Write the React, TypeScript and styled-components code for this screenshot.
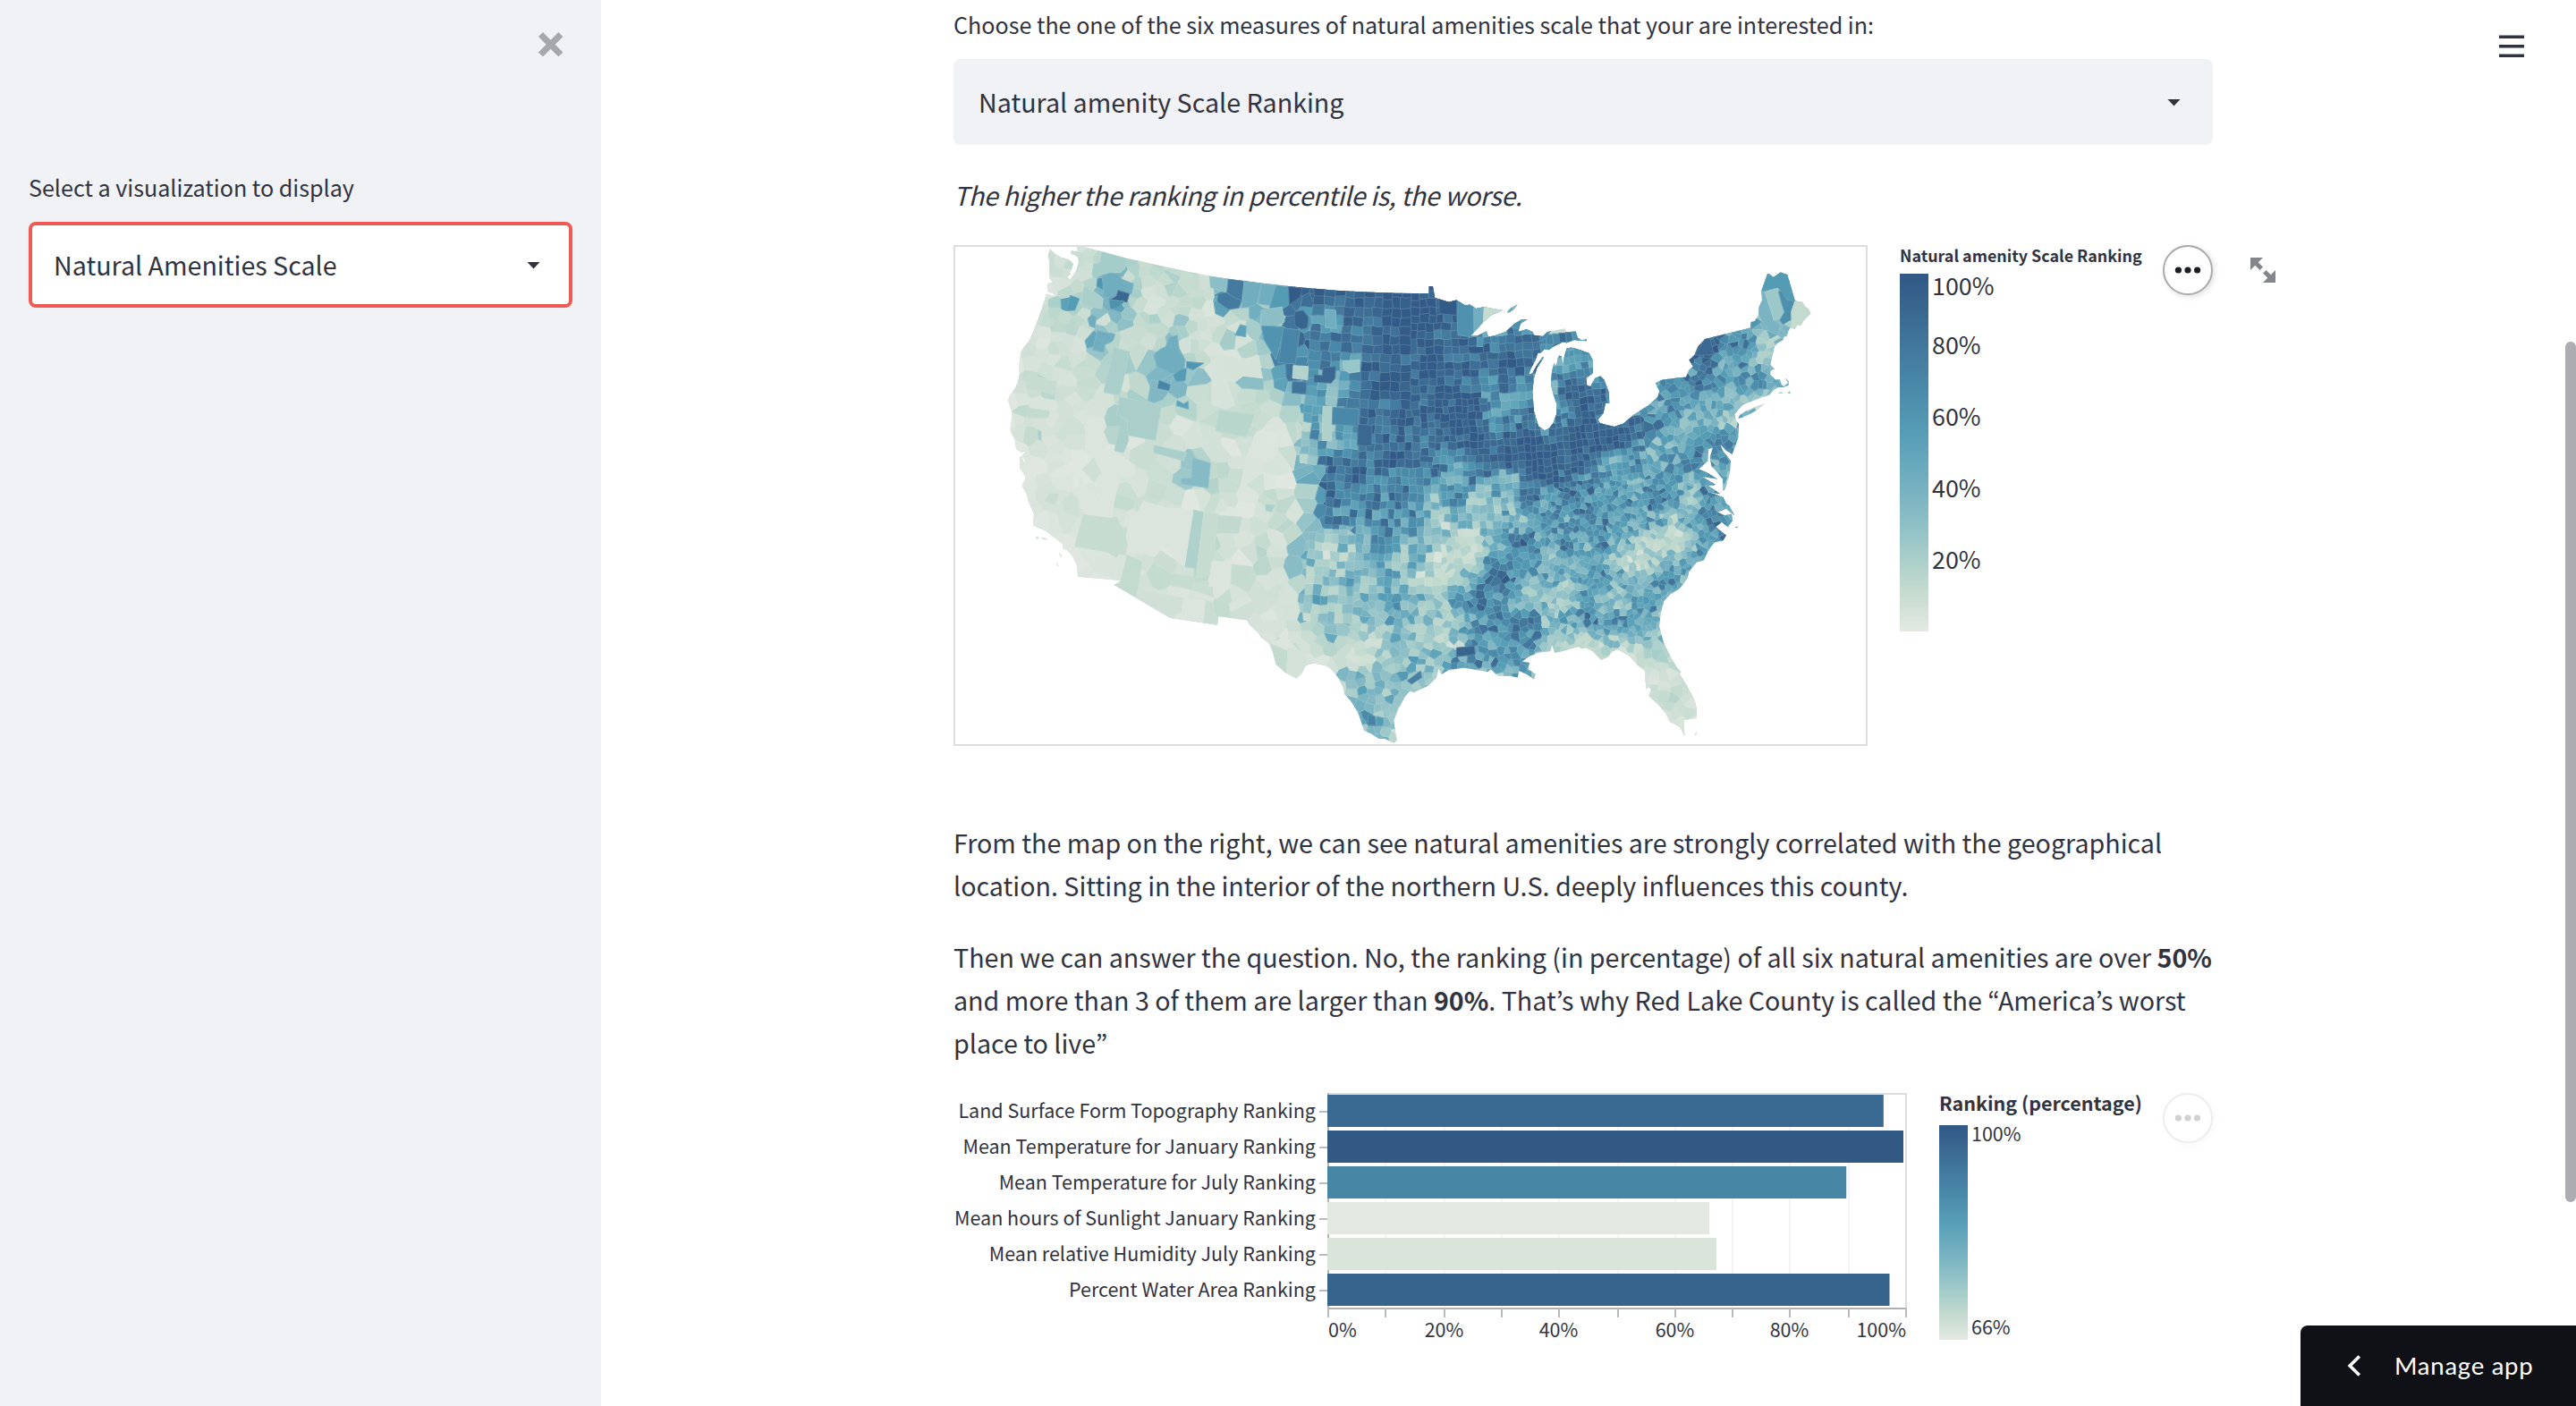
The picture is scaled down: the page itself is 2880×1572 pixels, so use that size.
import React from "react";
import styled, { createGlobalStyle } from "styled-components";

const FONT = '"Noto Sans CJK KR", "Noto Sans", sans-serif';
const INK = "#31333f";

const GlobalStyle = createGlobalStyle`
  * { box-sizing: border-box; }
  html, body { margin: 0; padding: 0; background: #fff; overflow: hidden; }
  body { font-family: ${FONT}; color: ${INK}; }
  p { margin: 0; }
`;

/* ---------- colour ramp ---------- */

const RAMP: [number, number[]][] = [
  [0, [228, 233, 226]],
  [0.12, [195, 218, 206]],
  [0.2, [170, 207, 202]],
  [0.27, [150, 196, 200]],
  [0.4, [118, 177, 193]],
  [0.55, [86, 158, 182]],
  [0.7, [72, 134, 167]],
  [0.8, [66, 119, 156]],
  [0.9, [57, 103, 143]],
  [1, [49, 88, 134]],
];

function ramp(t: number): string {
  const v = Math.max(0, Math.min(1, t));
  for (let i = 1; i < RAMP.length; i++) {
    if (v <= RAMP[i][0]) {
      const [a, ca] = RAMP[i - 1];
      const [b, cb] = RAMP[i];
      const f = (v - a) / (b - a);
      return `rgb(${ca.map((c, k) => Math.round(c + (cb[k] - c) * f)).join(",")})`;
    }
  }
  return "rgb(49,88,134)";
}

const RAMP_CSS = `linear-gradient(to top, ${RAMP.map(
  ([t]) => `${ramp(t)} ${t * 100}%`
).join(", ")})`;

/* ---------- map geometry ---------- */

type Pt = [number, number];

/* Map drawing units to page pixels, relative to the frame corner. */
const toPx = (u: number, v: number): Pt => [u / 3 - 6, v / 2.7034 - 14];

const parse = (s: string, dx = 0): Pt[] =>
  s
    .trim()
    .split(/\s+/)
    .map((p) => {
      const [x, y] = p.split(",").map(Number);
      return toPx(x + dx, y);
    });

const NORTH_WEST = `342,50 360,65 380,75 405,82 420,95 415,110 408,120 412,125 400,135 410,142
 430,115 438,90 436,75 428,70 415,62 428,55 436,60 432,42 460,45 518,58 600,78 700,98 800,118 880,132 940,140
 1050,153 1150,163 1300,175 1400,180 1500,183 1560,184`;

const EAST = `113,184 113,162 126,163 133,197 160,205 180,210 205,204 235,220 250,218 270,230
 298,225 360,235 320,250 295,270 270,295 252,313 275,312 305,298 312,315 330,312 370,300 400,275
 425,262 443,262 420,275 412,300 440,292 460,300 465,310 495,313 510,300 540,295 570,290 572,300
 605,298 612,318 625,325 642,322 640,328 600,325 575,333 560,332 530,345 515,355 500,352 490,362 478,365 470,385
 455,410 447,430 460,425 475,400 495,375 497,378 475,410 465,440 460,480 465,540 480,585 500,598
 515,592 530,575 540,550 542,520 530,490 522,460 525,420 532,395 540,405 545,380 550,372 558,375 560,405 568,370
 575,350 590,347 620,355 650,365 662,385 662,425 640,440 643,462 655,465 670,440 688,434
 700,445 715,480 718,515 705,515 698,545 680,565 685,575 710,582 735,587 765,577 800,550
 850,522 880,497 886,480 872,455 895,445 940,440 975,437 985,415 998,405 985,385 1003,370
 1015,345 1038,322 1190,288 1193,270 1205,268 1212,258 1218,250 1220,225 1230,205 1228,175 1248,125
 1255,125 1268,135 1292,120 1315,128 1340,205 1350,208 1365,210 1375,225 1385,230 1393,245 1370,265 1360,282 1348,280 1340,292 1325,287 1318,297
 1312,315 1305,312 1300,325 1280,335 1272,345 1265,370 1258,400 1272,412 1258,418 1258,430 1275,445 1290,445 1295,460 1303,465
 1318,455 1308,440 1320,450 1318,462 1300,468 1285,468 1270,475 1255,490 1215,503 1165,520 1150,535
 1138,550 1142,570 1152,578 1150,620 1140,645 1130,670 1110,660 1090,640 1098,660 1112,675 1125,690
 1122,725 1108,770 1100,782 1098,745 1075,720 1060,705 1055,680 1065,650 1050,655 1048,690 1018,715
 1045,725 1080,745 1030,738 1075,762 1050,765 1090,790 1055,785 1100,800 1110,820 1120,825 1137,855
 1110,835 1080,845 1105,855 1128,850 1132,870 1115,890 1095,875 1075,890 1110,915 1100,930
 1070,937 1050,960 1035,990 1010,997 985,1025 980,1045 955,1075 920,1095 900,1115 890,1150
 885,1190 900,1240 925,1285 945,1315 960,1330 952,1332 975,1365 1005,1415 1011,1440 1011,1468 968,1473
 970,1522 955,1495 920,1478 908,1455 885,1430 850,1400 858,1380 848,1374 842,1380 838,1350 838,1325 812,1307
 785,1280 745,1260 725,1268 715,1282 690,1292 665,1268 640,1255 625,1258 615,1252 560,1265 535,1270 525,1245
 520,1265 480,1270 450,1280 425,1297 450,1300 445,1320 470,1335 465,1350 440,1335 415,1325 410,1345
 385,1340 345,1340 320,1320 310,1328 290,1325 230,1315 180,1322 155,1335 145,1318 138,1345 110,1370 60,1390`;

const SOUTH_WEST = `1550,1385 1530,1405 1510,1440 1495,1475 1500,1510 1505,1535
 1495,1542 1465,1530 1445,1530 1420,1515 1395,1505 1375,1450 1350,1415 1330,1395 1325,1375 1312,1352 1300,1335
 1285,1320 1270,1310 1225,1302 1200,1308 1185,1335 1168,1348 1130,1330 1100,1305 1088,1265 1075,1240
 1050,1225 1040,1210 1010,1185 1003,1172 907,1160 903,1186 745,1165 557,1065 578,1052 435,1040 432,1005
 415,975 398,960 385,955 383,940 345,915 325,900 285,885 288,850 270,815 265,795 248,765 260,740 240,710 240,680
 246,675 255,697 258,690 248,675 260,660 248,665 228,655 225,630 208,595 215,550 202,510 205,495 225,470 235,450 240,425 237,405 245,360
 255,345 270,330 285,300 305,255 320,215 330,185 358,192 355,185 335,180 332,155 352,150 340,138 340,85 335,70`;

const EAST_ISLANDS = [
  "375,240 385,230 410,217 398,232 380,242",
  "1150,562 1155,552 1175,540 1215,524 1240,517 1215,535 1190,548 1165,558",
  "1284,487 1296,481 1300,487",
  "1316,485 1322,480 1325,487",
  "1003,1520 1010,1508 1011,1515",
  "1137,890 1148,888 1148,893",
];
const WEST_ISLANDS = [
  "293,920 303,920 304,926 296,926",
  "311,921 325,923 334,929 318,928",
  "371,968 382,976 379,982",
  "363,994 371,1008 367,1008",
  "410,58 418,54 424,60 416,68",
];

const path = (pts: Pt[]) =>
  "M" + pts.map(([x, y]) => `${x.toFixed(1)} ${y.toFixed(1)}`).join("L") + "Z";

const OUTLINE = [
  path([...parse(NORTH_WEST), ...parse(EAST, 1500), ...parse(SOUTH_WEST)]),
  ...EAST_ISLANDS.map((s) => path(parse(s, 1500))),
  ...WEST_ISLANDS.map((s) => path(parse(s))),
].join("");

/* Ranking surface, one digit per 20px column and 22px row. */
const FIELD = [
  "1111133222222555588999999999555555555555555566",
  "1111133222224855588899999999755555555555666665",
  "1111145312214855988989999976655555555555566665",
  "1114347212217555888899999863555555555555554422",
  "1122223323212144766889999875566778666666655522",
  "1111152115112337788889988877888776666688673433",
  "1111223245411117777589899788986565666678564333",
  "1221123245321434664789889876874887666777667555",
  "0111112233411122554788988996674898766655542222",
  "0211113331122211164888889996786798887655355555",
  "0111112221011110364677878898898999975557766666",
  "0010010122331200358889977788999896564676666666",
  "0011011122332100358776776566488876656647544444",
  "0011001122111012258787764834586776667637654444",
  "0001111000210112347677662445447676665357744444",
  "0000112200121121354456454225775757542236774444",
  "0000000101031022342455442237674656323566444444",
  "0000001112110211344546322367755456546644444444",
  "0000000111012111353445554677644364466333333333",
  "0000000001012111333355433467774576665333333333",
  "0000000001012111124224432366774323444222222222",
  "0000000001012112111113454676653222122211111111",
  "0000000001011111111444443444553222111111111111",
  "0000000001011111111444433444443222111211111111",
  "0000000001011111111464323333332222111111111111",
  "0000000001011111111434222222222222111111111111",
];

const LEVELS = [0.015, 0.06, 0.12, 0.2, 0.31, 0.43, 0.57, 0.72, 0.87, 0.98];

const at = (r: number, c: number) => {
  const row = FIELD[Math.max(0, Math.min(FIELD.length - 1, r))];
  return Number(row[Math.max(0, Math.min(row.length - 1, c))]);
};

const levelToValue = (l: number) => {
  const k = Math.max(0, Math.min(8.999, l));
  const i = Math.floor(k);
  return LEVELS[i] + (LEVELS[i + 1] - LEVELS[i]) * (k - i);
};

const ease = (t: number) => t * t * (3 - 2 * t);

function field(x: number, y: number): number {
  const c = ((x + 6) * 3 - 210) / 60;
  const r = ((y + 14) * 2.7034 - 30) / 60;
  const c0 = Math.floor(c);
  const r0 = Math.floor(r);
  const fc = ease(c - c0);
  const fr = ease(r - r0);
  const top = at(r0, c0) * (1 - fc) + at(r0, c0 + 1) * fc;
  const bot = at(r0 + 1, c0) * (1 - fc) + at(r0 + 1, c0 + 1) * fc;
  return top * (1 - fr) + bot * fr;
}

/* Albers equal-area conic */
const RAD = Math.PI / 180;
const N = (Math.sin(29.5 * RAD) + Math.sin(45.5 * RAD)) / 2;
const C = Math.cos(29.5 * RAD) ** 2 + 2 * N * Math.sin(29.5 * RAD);
const project = (lon: number, lat: number): Pt => {
  const rho = (1244.6 * Math.sqrt(C - 2 * N * Math.sin(lat * RAD))) / N;
  const th = N * (lon + 96) * RAD;
  return [1584.7 - 1066 + rho * Math.sin(th), -1043.8 - 274 + rho * Math.cos(th)];
};

let state = 20231;
const rnd = () => {
  state = (state * 1664525 + 1013904223) % 4294967296;
  return state / 4294967296;
};

/* west, east, south, north, lon step, lat step, jitter; jitter 0 marks surveyed land with square counties */
const REGIONS = [
  [-102.05, -94.6, 37, 40, 0.5, 0.43, 0],
  [-104, -95.8, 40, 43, 0.56, 0.43, 0],
  [-95.8, -91, 40.6, 43.5, 0.5, 0.36, 0],
  [-104, -96.5, 43, 49.2, 0.72, 0.46, 0],
  [-103, -100, 32, 36.5, 0.54, 0.43, 0],
  [-100, -94.5, 33.6, 37, 0.5, 0.42, 0],
  [-95.8, -90.5, 36.5, 40.6, 0.5, 0.38, 0],
  [-90.5, -88, 36.5, 38.4, 0.42, 0.32, 0.3],
  [-86.9, -82, 41.7, 46, 0.5, 0.35, 0],
  [-91, -86.9, 38.4, 42.5, 0.46, 0.38, 0],
  [-86.9, -80.5, 38.9, 41.7, 0.42, 0.34, 0],
  [-86.9, -80.5, 38.4, 38.9, 0.38, 0.32, 0.3],
  [-96.5, -86.9, 42.5, 49.5, 0.62, 0.42, 0],
  [-71, -66.5, 44.5, 47.6, 0.7, 0.6, 0.4],
  [-82, -79.9, 24.5, 30.3, 0.6, 0.42, 0.3],
  [-94.5, -88, 29, 36.5, 0.46, 0.36, 0.42],
  [-88, -75, 30.3, 38.4, 0.37, 0.3, 0.5],
  [-88, -82, 24.5, 30.3, 0.5, 0.4, 0.35],
  [-82, -66.5, 38.4, 45.6, 0.48, 0.36, 0.5],
  [-100, -94.5, 25.5, 33.6, 0.48, 0.4, 0.4],
  [-107, -100, 28.5, 32, 0.8, 0.55, 0.4],
  [-111, -102, 31, 49.3, 1.1, 0.66, 0.48],
  [-125.5, -111, 45, 49.3, 0.85, 0.55, 0.48],
  [-125.5, -119, 32, 45, 0.9, 0.6, 0.48],
  [-119, -111, 31, 45, 1.25, 0.85, 0.48],
];

interface Seed {
  x: number;
  y: number;
  reach: number;
}

interface Cell {
  d: string;
  fill: string;
}

function shade(x: number, y: number): string {
  const base = field(x, y);
  const spread = base < 2.2 ? 0.9 : base > 7.6 ? 1.3 : 1.9;
  return ramp(levelToValue(base + (rnd() + rnd() - 1) * spread * 1.2));
}

function makeSeeds(): Seed[] {
  const seeds: Seed[] = [];
  REGIONS.forEach(([w, e, s, n, dx, dy, j], idx) => {
    const cols = Math.round((e - w) / dx);
    const rows = Math.round((n - s) / dy);
    const sx = (e - w) / cols;
    const sy = (n - s) / rows;
    for (let r = 0; r < rows; r++) {
      const shift = j > 0.1 ? (rnd() - 0.5) * 0.4 : 0;
      for (let c = 0; c < cols; c++) {
        const lon = w + (c + 0.5 + shift + (rnd() - 0.5) * 2 * j) * sx;
        const lat = s + (r + 0.5 + (rnd() - 0.5) * 2 * j) * sy;
        const taken = REGIONS.slice(0, idx).some(
          (q) => lon > q[0] && lon < q[1] && lat > q[2] && lat < q[3]
        );
        if (taken) continue;
        const [x, y] = project(lon, lat);
        seeds.push({ x, y, reach: Math.max(sx * 17, sy * 22) * 2.8 });
      }
    }
  });
  return seeds;
}

function clip(poly: Pt[], a: Seed, b: Seed): Pt[] {
  const mx = (a.x + b.x) / 2;
  const my = (a.y + b.y) / 2;
  const nx = b.x - a.x;
  const ny = b.y - a.y;
  const side = (p: Pt) => (p[0] - mx) * nx + (p[1] - my) * ny;
  const out: Pt[] = [];
  for (let i = 0; i < poly.length; i++) {
    const p = poly[i];
    const q = poly[(i + 1) % poly.length];
    const sp = side(p);
    const sq = side(q);
    if (sp <= 0) out.push(p);
    if (sp < 0 !== sq < 0) {
      const t = sp / (sp - sq);
      out.push([p[0] + (q[0] - p[0]) * t, p[1] + (q[1] - p[1]) * t]);
    }
  }
  return out;
}

function makeCells(): Cell[] {
  const seeds = makeSeeds();
  return seeds.map((s) => {
    const h = s.reach / 1.6;
    let poly: Pt[] = [
      [s.x - h, s.y - h],
      [s.x + h, s.y - h],
      [s.x + h, s.y + h],
      [s.x - h, s.y + h],
    ];
    for (const o of seeds) {
      if (o === s) continue;
      if (Math.abs(o.x - s.x) > s.reach || Math.abs(o.y - s.y) > s.reach) continue;
      poly = clip(poly, s, o);
    }
    return { d: path(poly), fill: shade(s.x, s.y) };
  });
}

/* Surveyed land: the box is halved until the parts are about a county in size. */
function makeTracts(): Cell[] {
  const out: Cell[] = [];
  const bend = (lon: number, lat: number): Pt =>
    project(lon + 0.04 * Math.sin(lat * 5.1 + lon * 2.3), lat + 0.03 * Math.sin(lon * 4.7 - lat * 1.9));
  const split = (w: number, e: number, s: number, n: number, dx: number, dy: number) => {
    const kx = (e - w) / dx;
    const ky = (n - s) / dy;
    if (kx * ky < 1.5 || (kx < 1.45 && ky < 1.45)) {
      const ring = [bend(w, s), bend((w + e) / 2, s), bend(e, s), bend(e, n), bend((w + e) / 2, n), bend(w, n)];
      const [cx, cy] = project((w + e) / 2, (s + n) / 2);
      out.push({ d: path(ring), fill: shade(cx, cy) });
      return;
    }
    const alongX = kx > ky;
    const k = alongX ? kx : ky;
    const parts = Math.max(2, Math.round(k));
    const cut = Math.floor(parts / 2) / parts + (rnd() - 0.5) * (k > 3 ? 0.05 : 0.16);
    if (alongX) {
      const m = w + (e - w) * cut;
      split(w, m, s, n, dx, dy);
      split(m, e, s, n, dx, dy);
    } else {
      const m = s + (n - s) * cut;
      split(w, e, s, m, dx, dy);
      split(w, e, m, n, dx, dy);
    }
  };
  REGIONS.filter((q) => q[6] === 0)
    .reverse()
    .forEach(([w, e, s, n, dx, dy]) => split(w, e, s, n, dx, dy));
  return out;
}

/* Counties large enough to be told apart: level, then the ring. */
const WEST_COUNTIES: [number, string][] = [
  [3.2, "517,58 598,78 592,110 580,120 545,122 515,128 490,140 483,125 488,100 510,90"],
  [5, "515,130 545,122 575,125 580,140 622,155 615,185 570,177 555,200 535,195 520,198 520,155"],
  [8.2, "570,175 608,185 600,210 545,203 565,192"],
  [6.4, "540,203 592,208 575,222 560,230 545,230"],
  [6, "410,190 440,200 425,235 397,236"],
  [3, "455,165 490,178 520,200 515,230 465,222 448,212"],
  [5, "468,260 482,248 497,255 493,288 475,283"],
  [5, "500,297 560,307 552,328 525,340 523,362 485,355"],
  [3, "555,348 608,360 592,430 575,492 522,483"],
  [3, "575,497 715,522 695,628 600,612 598,560 565,552"],
  [3, "580,560 600,568 605,630 588,665 558,660"],
  [5, "740,318 768,310 775,350 795,385 792,410 770,425 750,427 700,405 690,370 712,352 730,345"],
  [6, "755,430 780,415 800,410 795,448 765,450"],
  [6.2, "800,390 858,395 822,415 800,408"],
  [4.4, "682,445 705,450 700,470 740,480 720,505 690,515 670,508"],
  [6.9, "708,447 745,460 740,478 702,470"],
  [5.6, "768,507 790,518 805,510 806,534 766,523"],
  [4, "962,452 990,433 1058,440 1057,475 985,470"],
  [4, "877,132 942,140 933,180 905,175 880,165"],
  [7.4, "940,140 993,148 985,205 962,198 935,180"],
  [7.4, "905,185 935,182 962,198 985,205 975,228 940,232 903,208"],
  [5, "993,148 1050,153 1035,215 1015,225 985,228"],
  [5, "1050,155 1100,160 1080,220 1040,215"],
  [6, "1100,160 1142,165 1148,215 1115,235 1078,228"],
  [9, "1142,163 1188,168 1180,195 1145,218"],
  [5.6, "980,278 1000,283 998,315 962,310"],
  [4, "1050,235 1120,225 1128,270 1095,285 1048,280"],
  [6.3, "1050,282 1128,285 1100,385 1060,325"],
  [6.9, "1125,288 1180,295 1165,397 1108,393"],
  [1, "880,370 1040,385 1055,440 990,433 962,452 890,445"],
  [0.8, "885,390 910,395 935,450 960,520 935,535 885,520"],
  [2.4, "907,535 1028,550 1000,618 898,600"],
  [4.2, "820,680 880,697 872,772 780,760 782,742 815,742"],
  [3, "690,643 800,665 790,690 690,665"],
  [2.8, "822,838 858,845 830,1040 828,1015 792,1010"],
  [1.8, "858,845 905,850 885,1035 832,1045"],
  [1.8, "455,848 565,862 603,925 595,975 425,948"],
  [0.4, "440,740 550,862 455,850 440,830"],
  [0.4, "480,655 560,662 628,705 625,735 575,738 555,820 550,862 505,805 490,755 515,725"],
  [1.3, "450,715 480,690 510,725 490,755"],
  [0.3, "630,855 655,812 725,830 675,870 672,905 655,972 610,965 598,920 608,860"],
  [0.4, "725,832 822,838 792,1010 760,985 720,940 672,905 675,870"],
  [3, "1065,822 1095,825 1085,845 1065,840"],
  [0.4, "885,993 957,1000 948,1062 875,1070"],
  [1.9, "952,1003 1020,1010 1005,1065 948,1062"],
  [2.1, "905,855 985,860 975,908 900,908"],
  [1.7, "330,800 345,788 370,790 360,822 325,812"],
  [1.8, "265,430 365,450 358,490 262,470"],
  [2, "265,530 340,540 335,560 268,560"],
  [3, "300,597 312,600 312,630 304,625"],
  [2, "578,1060 600,975 650,995 635,1080 630,1102 557,1065"],
  [1.2, "637,1080 790,1105 785,1145 745,1165 630,1105"],
  [0.4, "790,1105 865,1115 858,1180 780,1170"],
  [1.6, "865,1112 890,1118 892,1150 905,1160 903,1186 858,1180"],
  [0.4, "1082,1240 1130,1222 1160,1248 1135,1262"],
  [2, "1085,1248 1140,1265 1135,1328 1100,1305"],
  [1, "1140,1265 1160,1248 1220,1302 1200,1308 1168,1348 1135,1328"],
  [2.6, "1158,402 1208,405 1205,445 1155,440"],
  [8.2, "1228,430 1255,432 1258,408 1300,405 1298,440 1285,455 1228,452"],
  [7.6, "1155,450 1203,452 1200,488 1153,485"],
  [2.8, "1257,525 1288,528 1285,630 1255,628"],
  [6.8, "1290,528 1378,533 1376,585 1288,580"],
  [8.2, "1375,580 1422,582 1420,645 1373,643"],
  [8.4, "1162,240 1190,235 1208,255 1205,288 1185,292 1162,280"],
  [5, "1265,232 1300,235 1302,290 1265,287"],
  [3.6, "1325,388 1380,385 1380,420 1345,425 1325,410"],
  [7, "1408,1458 1432,1462 1435,1490 1408,1488"],
  [6, "1437,1462 1460,1468 1458,1490 1437,1490"],
];
const EAST_COUNTIES: [number, string][] = [
  [6, "1228,178 1248,125 1268,135 1292,118 1320,128 1342,208 1312,203 1295,180 1283,168"],
  [4.6, "1228,178 1242,180 1272,265 1290,280 1285,310 1255,300 1225,260 1215,240"],
  [3.4, "1240,180 1283,168 1295,215 1305,240 1300,255 1270,265"],
  [6.5, "1285,178 1298,178 1312,203 1340,208 1328,240 1330,262 1300,278 1290,265 1305,240 1296,215"],
  [2, "1340,208 1367,208 1395,245 1370,278 1330,275 1328,240"],
  [6.4, "205,205 265,225 268,300 250,315 210,310"],
  [5, "263,226 298,223 297,270 264,302"],
  [1.8, "298,223 362,234 295,275"],
  [9.4, "146,200 206,200 205,250 148,245"],
  [8.2, "1005,370 1038,322 1056,320 1068,368 1045,370"],
  [2, "885,1387 915,1387 915,1420 885,1420"],
  [7.2, "40,1355 85,1325 88,1345 55,1365"],
  [8.4, "205,1255 265,1250 268,1275 205,1282"],
];

const CELLS: Cell[] = [
  ...makeCells(),
  ...makeTracts(),
  ...WEST_COUNTIES.map(([l, s]) => ({ d: path(parse(s)), fill: ramp(levelToValue(l)) })),
  ...EAST_COUNTIES.map(([l, s]) => ({ d: path(parse(s, 1500)), fill: ramp(levelToValue(l)) })),
];

const MapSvg = styled.svg`
  display: block;
  flex: none;
`;

function CountyMap() {
  return (
    <MapSvg width={1022} height={560} viewBox="0 0 1022 560">
      <defs>
        <clipPath id="land">
          <path d={OUTLINE} />
        </clipPath>
      </defs>
      <g clipPath="url(#land)">
        <rect width={1022} height={560} fill="#c9dcd3" />
        {CELLS.map((c, i) => (
          <g key={i}>
            <path d={c.d} fill={c.fill} stroke={c.fill} strokeWidth={0.9} />
            <path d={c.d} fill="none" stroke="#dcebea" strokeOpacity={0.2} strokeWidth={0.9} />
          </g>
        ))}
      </g>
      <rect x={1} y={1} width={1020} height={558} fill="none" stroke="#dddddd" strokeWidth={2} />
    </MapSvg>
  );
}

/* ---------- page shell ---------- */

const Page = styled.div`
  display: flex;
  width: 2880px;
  height: 1572px;
  overflow: hidden;
  position: relative;
`;

const Sidebar = styled.aside`
  width: 672px;
  flex: none;
  background: #f0f2f6;
  padding: 36px 32px 0;
`;

const CloseRow = styled.div`
  display: flex;
  justify-content: flex-end;
  padding-right: 10px;
  height: 152px;
  color: #a6a7ad;
`;

const Main = styled.main`
  flex: 1;
  display: flex;
  justify-content: center;
  padding: 6px 12px 0 0;
`;

const Column = styled.div`
  width: 1408px;
`;

const FieldLabel = styled.div`
  font-size: 25.1px;
  line-height: 42px;
  white-space: nowrap;
  margin-bottom: 18px;
`;

const SelectBox = styled.div<{ $focused?: boolean }>`
  display: flex;
  align-items: center;
  justify-content: space-between;
  height: 96px;
  border-radius: 8px;
  border: 4px solid ${(p) => (p.$focused ? "#ee5b54" : "#f0f2f6")};
  background: ${(p) => (p.$focused ? "#fff" : "#f0f2f6")};
  padding: 0 32px 0 24px;
  font-size: 28.65px;
  line-height: 48px;
`;

const CaretIcon = styled.svg`
  margin-top: 2px;
`;

const Text = styled.p<{ $top: number; $italic?: boolean }>`
  margin-top: ${(p) => p.$top}px;
  font-size: 28.65px;
  line-height: 48px;
  white-space: nowrap;
  font-style: ${(p) => (p.$italic ? "italic" : "normal")};
  letter-spacing: ${(p) => (p.$italic ? -0.37 : 0)}px;
`;

const Strong = styled.strong`
  font-weight: 700;
`;

const ChartRow = styled.div<{ $top: number }>`
  display: flex;
  align-items: flex-start;
  margin-top: ${(p) => p.$top}px;
`;

const Legend = styled.div<{ $left: number; $width: number }>`
  flex: none;
  width: ${(p) => p.$width}px;
  margin-left: ${(p) => p.$left}px;
`;

const LegendTitle = styled.div<{ $size: number; $line: number; $height: number }>`
  font-weight: 700;
  font-size: ${(p) => p.$size}px;
  line-height: ${(p) => p.$line}px;
  height: ${(p) => p.$height}px;
  white-space: nowrap;
`;

const LegendBody = styled.div`
  display: flex;
  gap: 4px;
`;

const Gradient = styled.div<{ $height: number }>`
  width: 32px;
  height: ${(p) => p.$height}px;
  background: ${RAMP_CSS};
`;

const LegendLabels = styled.div<{ $size: number; $between?: boolean }>`
  display: flex;
  flex-direction: column;
  justify-content: ${(p) => (p.$between ? "space-between" : "flex-start")};
  font-size: ${(p) => p.$size}px;
`;

const LegendLabel = styled.span<{ $height: number; $after?: number }>`
  line-height: ${(p) => p.$height}px;
  margin-bottom: ${(p) => p.$after ?? 0}px;
`;

const MenuButton = styled.button<{ $faded?: boolean }>`
  flex: none;
  display: flex;
  align-items: center;
  justify-content: center;
  width: 56px;
  height: 56px;
  padding: 0;
  border: 2px solid #aaa;
  border-radius: 50%;
  background: #fff;
  color: #1b1e23;
  box-shadow: 2px 2px 6px rgba(0, 0, 0, 0.12);
  opacity: ${(p) => (p.$faded ? 0.2 : 1)};
`;

const ExpandIcon = styled.svg`
  flex: none;
  margin: 14px 0 0 42px;
  color: #84868c;
`;

const BarSvg = styled.svg`
  display: block;
  flex: none;
  overflow: visible;
`;

const MenuIcon = styled.svg`
  position: absolute;
  top: 38px;
  right: 58px;
`;

const ScrollThumb = styled.div`
  position: absolute;
  right: 0;
  top: 382px;
  width: 12px;
  height: 962px;
  border-radius: 6px;
  background: #adacb1;
`;

const ManageApp = styled.div`
  position: absolute;
  right: 0;
  bottom: 0;
  width: 308px;
  height: 90px;
  display: flex;
  align-items: center;
  padding-left: 52px;
  gap: 37px;
  background: #0f1116;
  border-top-left-radius: 8px;
  color: #fff;
  font-family: Lato, "Open Sans", sans-serif;
  font-size: 27.5px;
  line-height: 36px;
  letter-spacing: 0.75px;
  white-space: nowrap;
`;

const Caret = () => (
  <CaretIcon width={15} height={8} viewBox="0 0 15 8">
    <path d="M0.5 0H14.5L7.5 7.6Z" fill={INK} />
  </CaretIcon>
);

const Dots = () => (
  <svg width={32} height={8} viewBox="0 0 32 8" fill="currentColor">
    <circle cx={5.4} cy={4} r={3.6} />
    <circle cx={16} cy={4} r={3.6} />
    <circle cx={26.6} cy={4} r={3.6} />
  </svg>
);

/* ---------- bar chart ---------- */

const BARS = [
  { label: "Land Surface Form Topography Ranking", end: 621.8, fill: "#3a6991" },
  { label: "Mean Temperature for January Ranking", end: 644, fill: "#325884" },
  { label: "Mean Temperature for July Ranking", end: 580.2, fill: "#4786a5" },
  { label: "Mean hours of Sunlight January Ranking", end: 427, fill: "#e3e8e1" },
  { label: "Mean relative Humidity July Ranking", end: 435, fill: "#dbe4db" },
  { label: "Percent Water Area Ranking", end: 628.5, fill: "#37648d" },
];

const AXIS = [0, 64, 130, 194, 258, 324, 388, 452, 516, 582, 646];

function BarChart() {
  const left = 419;
  return (
    <BarSvg width={1066} height={290} viewBox="0 0 1066 290" fontFamily={FONT} fontSize={21.5} fill={INK}>
      {AXIS.slice(1, -1).map((x) => (
        <line key={x} x1={left + x} x2={left + x} y1={2} y2={241} stroke="#f3f4f5" strokeWidth={2} />
      ))}
      <rect x={left} y={1} width={646} height={240} fill="none" stroke="#dddddd" strokeWidth={2} />
      <line x1={left} x2={left} y1={0} y2={242} stroke="#b4b4b4" strokeWidth={2} />
      <line x1={left - 1} x2={left + 647} y1={241} y2={241} stroke="#b0b0b0" strokeWidth={2} />
      {AXIS.map((x) => (
        <line key={x} x1={left + x} x2={left + x} y1={240} y2={251} stroke="#bbbbbb" strokeWidth={2} />
      ))}
      {BARS.map((b, i) => (
        <g key={b.label}>
          <line x1={409} x2={418} y1={21 + i * 40} y2={21 + i * 40} stroke="#bbbbbb" strokeWidth={2} />
          <rect x={418} y={2 + i * 40} width={b.end} height={36} fill={b.fill} />
          <text x={405} y={28 + i * 40} textAnchor="end">
            {b.label}
          </text>
        </g>
      ))}
      <text x={left} y={273}>0%</text>
      {[1, 2, 3, 4].map((k) => (
        <text key={k} x={left + AXIS[k * 2] - 0.5} y={273} textAnchor="middle">
          {k * 20}%
        </text>
      ))}
      <text x={left + 646} y={273} textAnchor="end">100%</text>
    </BarSvg>
  );
}

export default function App() {
  return (
    <>
      <GlobalStyle />
      <Page>
        <Sidebar>
          <CloseRow>
            <svg width={28} height={28} viewBox="0 0 8 8" fill="currentColor">
              <path d="M1.406 0l-1.406 1.406.688.719 1.781 1.781-1.781 1.781-.688.719 1.406 1.406.719-.688 1.781-1.781 1.781 1.781.719.688 1.406-1.406-.688-.719-1.781-1.781 1.781-1.781.688-.719-1.406-1.406-.719.688-1.781 1.781-1.781-1.781-.719-.688z" />
            </svg>
          </CloseRow>
          <FieldLabel>Select a visualization to display</FieldLabel>
          <SelectBox $focused>
            <span>Natural Amenities Scale</span>
            <Caret />
          </SelectBox>
        </Sidebar>
        <Main>
          <Column>
            <FieldLabel>
              Choose the one of the six measures of natural amenities scale that your are interested in:
            </FieldLabel>
            <SelectBox>
              <span>Natural amenity Scale Ranking</span>
              <Caret />
            </SelectBox>
            <Text $top={32} $italic>
              The higher the ranking in percentile is, the worse.
            </Text>
            <ChartRow $top={32}>
              <CountyMap />
              <Legend $left={36} $width={294}>
                <LegendTitle $size={17.9} $line={22} $height={32}>
                  Natural amenity Scale Ranking
                </LegendTitle>
                <LegendBody>
                  <Gradient $height={400} />
                  <LegendLabels $size={26.9}>
                    <LegendLabel $height={26} $after={13}>100%</LegendLabel>
                    <LegendLabel $height={80}>80%</LegendLabel>
                    <LegendLabel $height={80}>60%</LegendLabel>
                    <LegendLabel $height={80}>40%</LegendLabel>
                    <LegendLabel $height={80}>20%</LegendLabel>
                  </LegendLabels>
                </LegendBody>
              </Legend>
              <MenuButton aria-label="Chart menu">
                <Dots />
              </MenuButton>
              <ExpandIcon width={28} height={28} viewBox="0 0 8 8" fill="currentColor">
                <path d="M0 0v4l1.5-1.5 1.5 1.5 1-1-1.5-1.5 1.5-1.5h-4zm5 4l-1 1 1.5 1.5-1.5 1.5h4v-4l-1.5 1.5-1.5-1.5z" />
              </ExpandIcon>
            </ChartRow>
            <Text $top={84}>
              From the map on the right, we can see natural amenities are strongly correlated with the geographical
              <br />
              location. Sitting in the interior of the northern U.S. deeply influences this county.
            </Text>
            <Text $top={32}>
              Then we can answer the question. No, the ranking (in percentage) of all six natural amenities are over{" "}
              <Strong>50%</Strong>
              <br />
              and more than 3 of them are larger than <Strong>90%</Strong>. That’s why Red Lake County is called the
              “America’s worst
              <br />
              place to live”
            </Text>
            <ChartRow $top={32}>
              <BarChart />
              <Legend $left={36} $width={250}>
                <LegendTitle $size={21.5} $line={22} $height={36}>
                  Ranking (percentage)
                </LegendTitle>
                <LegendBody>
                  <Gradient $height={240} />
                  <LegendLabels $size={21.5} $between>
                    <LegendLabel $height={18}>100%</LegendLabel>
                    <LegendLabel $height={30}>66%</LegendLabel>
                  </LegendLabels>
                </LegendBody>
              </Legend>
              <MenuButton $faded aria-label="Chart menu">
                <Dots />
              </MenuButton>
            </ChartRow>
          </Column>
        </Main>
        <MenuIcon width={28} height={28} viewBox="0 0 28 28" fill={INK}>
          <rect y={1.5} width={28} height={3.5} />
          <rect y={12} width={28} height={3.5} />
          <rect y={22.5} width={28} height={3.5} />
        </MenuIcon>
        <ScrollThumb />
        <ManageApp>
          <svg width={16} height={24} viewBox="0 0 16 24" fill="none" stroke="#fff" strokeWidth={3.6}>
            <path d="M13.8 1.5L3.2 12L13.8 22.5" />
          </svg>
          <span>Manage app</span>
        </ManageApp>
      </Page>
    </>
  );
}
